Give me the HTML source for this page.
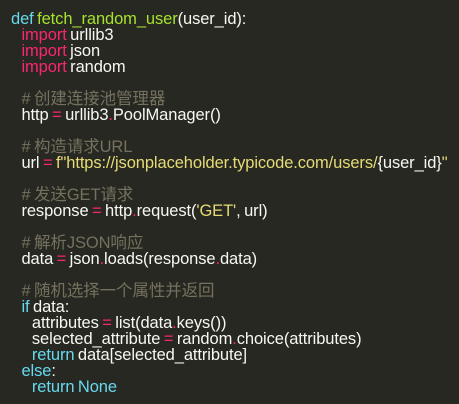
<!DOCTYPE html>
<html><head><meta charset="utf-8"><style>
html,body{margin:0;padding:0;background:#272822;width:459px;height:404px;overflow:hidden}
pre{margin:0;position:absolute;left:11px;top:11px;font-family:"Liberation Sans","Noto Sans CJK SC",sans-serif;font-size:16.5px;line-height:16px;color:#f8f8f2;word-spacing:-1px;letter-spacing:-0.1px}
.k{color:#f92672}.b{color:#66d9ef}.f{color:#a6e22e}.c{color:#75715e}.s{color:#e6db74}
</style></head><body><pre><span class="b">def</span> <span class="f">fetch_random_user</span>(user_id):
   <span class="k">import</span> urllib3
   <span class="k">import</span> json
   <span class="k">import</span> random

   <span class="c"># 创建连接池管理器</span>
   http <span class="k">=</span> urllib3<span class="k">.</span>PoolManager()

   <span class="c"># 构造请求URL</span>
   url <span class="k">=</span> <span class="s">f"https://jsonplaceholder.typicode.com/users/</span>{user_id}<span class="s">"</span>

   <span class="c"># 发送GET请求</span>
   response <span class="k">=</span> http<span class="k">.</span>request(<span class="s">'GET'</span>, url)

   <span class="c"># 解析JSON响应</span>
   data <span class="k">=</span> json<span class="k">.</span>loads(response<span class="k">.</span>data)

   <span class="c"># 随机选择一个属性并返回</span>
   <span class="b">if</span> data:
      attributes <span class="k">=</span> list(data<span class="k">.</span>keys())
      selected_attribute <span class="k">=</span> random<span class="k">.</span>choice(attributes)
      <span class="b">return</span> data[selected_attribute]
   <span class="b">else</span>:
      <span class="b">return</span> <span class="b">None</span></pre></body></html>
